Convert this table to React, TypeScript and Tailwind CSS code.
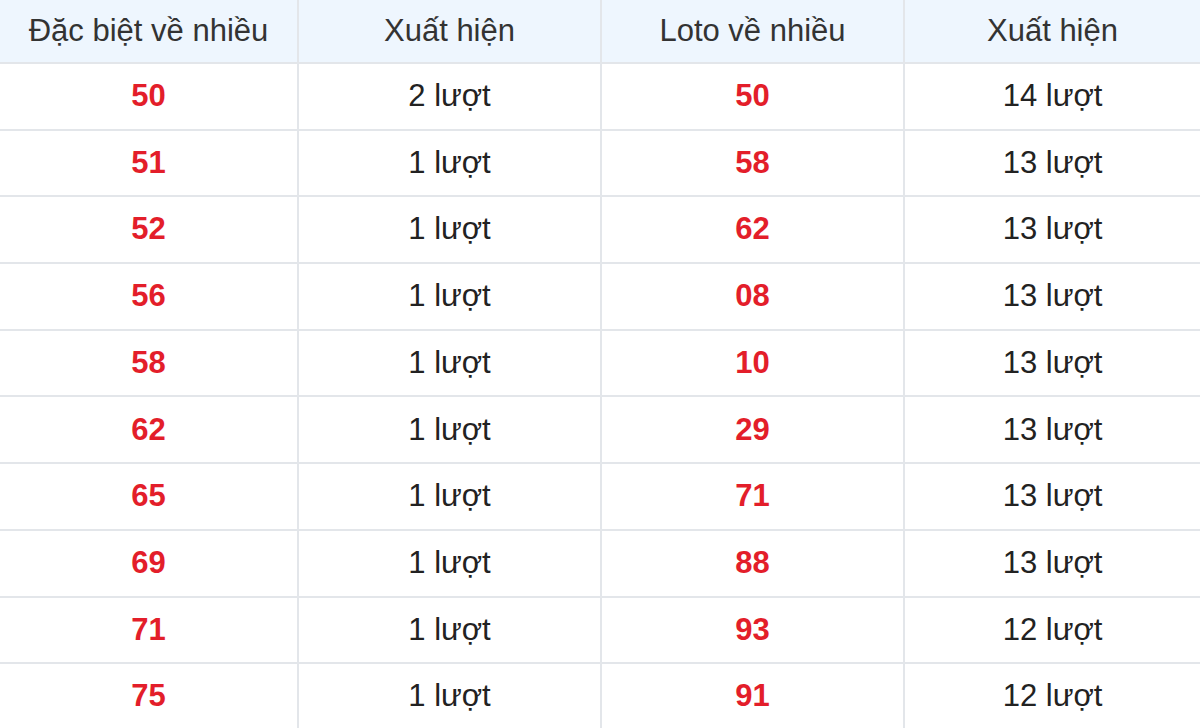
import React from 'react'

const rows = [
  { db: '50', dbCount: 2, loto: '50', lotoCount: 14 },
  { db: '51', dbCount: 1, loto: '58', lotoCount: 13 },
  { db: '52', dbCount: 1, loto: '62', lotoCount: 13 },
  { db: '56', dbCount: 1, loto: '08', lotoCount: 13 },
  { db: '58', dbCount: 1, loto: '10', lotoCount: 13 },
  { db: '62', dbCount: 1, loto: '29', lotoCount: 13 },
  { db: '65', dbCount: 1, loto: '71', lotoCount: 13 },
  { db: '69', dbCount: 1, loto: '88', lotoCount: 13 },
  { db: '71', dbCount: 1, loto: '93', lotoCount: 12 },
  { db: '75', dbCount: 1, loto: '91', lotoCount: 12 },
]

const headers = ['Đặc biệt về nhiều', 'Xuất hiện', 'Loto về nhiều', 'Xuất hiện']

export default function App() {
  return (
    <div className="w-[1200px] h-[728px] overflow-hidden bg-white font-['Liberation_Sans',Arial,sans-serif] text-[31px]">
      {/* Header */}
      <div className="grid grid-cols-[297px_303px_303px_297px] h-[64px] bg-[#eef6fe] border-b-2 border-[#e3e6ea] text-[#333]">
        {headers.map((h, i) => (
          <div
            key={i}
            className={`flex items-center justify-center ${i > 0 ? 'border-l-2 border-[#e3e6ea]' : ''}`}
          >
            {h}
          </div>
        ))}
      </div>

      {/* Body */}
      {rows.map((r, idx) => (
        <div
          key={idx}
          className="grid grid-cols-[297px_303px_303px_297px] h-[66.7px] border-b-2 border-[#e3e6ea]"
        >
          <div className="flex items-center justify-center font-bold text-[#e31e2a]">{r.db}</div>
          <div className="flex items-center justify-center border-l-2 border-[#e3e6ea] text-[#222]">
            {r.dbCount} lượt
          </div>
          <div className="flex items-center justify-center border-l-2 border-[#e3e6ea] font-bold text-[#e31e2a]">
            {r.loto}
          </div>
          <div className="flex items-center justify-center border-l-2 border-[#e3e6ea] text-[#222]">
            {r.lotoCount} lượt
          </div>
        </div>
      ))}
    </div>
  )
}
